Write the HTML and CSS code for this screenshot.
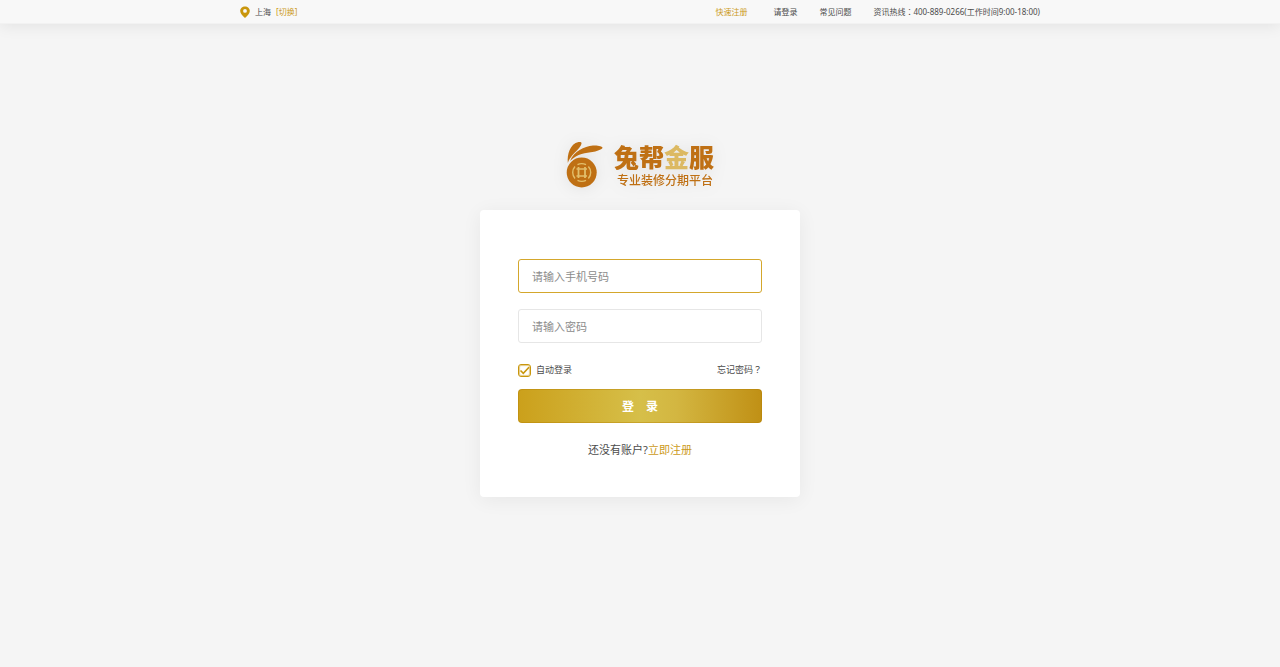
FILE: index.html
```
<!DOCTYPE html>
<html lang="zh-CN">
<head>
  <meta charset="UTF-8" />
  <meta name="viewport" content="width=device-width, initial-scale=1.0"/>
  <title>兔帮金服</title>
  <link rel="stylesheet" href="styles.css">
</head>
<body>
  <header class="topbar">
    <div class="topbar-inner">
      <div class="city">
        <svg class="pin" viewBox="0 0 10 12" aria-hidden="true">
          <path fill="#c9960c" fill-rule="evenodd" d="M5 0.5C2.3 0.5 0.2 2.5 0.2 5C0.2 7.6 2.4 9.4 5 12C7.6 9.4 9.8 7.6 9.8 5C9.8 2.5 7.7 0.5 5 0.5ZM5 3A1.9 1.9 0 1 1 5 6.8A1.9 1.9 0 1 1 5 3Z"/>
        </svg>
        <span>上海</span>
        <a class="gold" href="#">[切换]</a>
      </div>
      <nav class="links">
        <a class="gold register" href="#">快速注册</a>
        <a href="#">请登录</a>
        <a href="#">常见问题</a>
        <span>资讯热线<span class="mark" lang="zh-TW">：</span>400-889-0266(工作时间9:00-18:00)</span>
      </nav>
    </div>
  </header>

  <main class="page">
    <div class="brand">
      <svg class="logo" viewBox="0 0 38 48" aria-hidden="true">
        <path fill="#bf7014" d="M1.800 22C1 13 4 3 12.500 1C16 0.500 16 2 14.800 4.500C13 8 9 11 6.500 14C4.500 16.500 2.800 19 1.800 22Z"/>
        <path fill="#bf7014" d="M4 20C8 10.500 18 5.500 27 4.600C32 4.200 36.500 5.500 36.500 6.800C36 8.500 31.500 10 28 10.800C19 12 12 12.500 4 20Z"/>
        <circle cx="15.700" cy="31.500" r="15" fill="#bf7014"/>
        <g fill="none" stroke="#e2bf6c">
          <path stroke-width="1.400" d="M9 25.500A9 9 0 0 0 9 37.500M22.400 25.500A9 9 0 0 1 22.400 37.500M11.500 23.700A9.500 9.500 0 0 1 20 23.700M11.500 39.300A9.500 9.500 0 0 0 20 39.300"/>
          <path stroke-width="1.800" d="M12.500 26V37M19 26V37"/>
          <path stroke-width="1.500" d="M10.500 28H21M10.500 35H21"/>
        </g>
      </svg>
      <div class="brand-text">
        <h1>兔帮<span>金</span>服</h1>
        <p>专业装修分期平台</p>
      </div>
    </div>

    <form class="card">
      <input class="field active" type="text" placeholder="请输入手机号码" aria-label="手机号码" />
      <input class="field" type="password" placeholder="请输入密码" aria-label="密码" />
      <div class="options">
        <label class="remember" for="auto">
          <span class="tick">
            <input type="checkbox" id="auto" checked />
            <svg viewBox="0 0 13 13" aria-hidden="true">
              <path fill="none" stroke="#c9960c" stroke-width="1.600" d="M2.500 6.500L5.300 9.300L11 3.200"/>
            </svg>
          </span>
          自动登录
        </label>
        <a href="#">忘记密码<span class="mark" lang="zh-TW">？</span></a>
      </div>
      <button class="login" type="submit">登　录</button>
      <p class="signup">还没有账户?<a class="gold" href="#">立即注册</a></p>
    </form>
  </main>
</body>
</html>
```
FILE: styles.css
```
* {
  box-sizing: border-box;
}
body {
  margin: 0;
  min-height: 100vh;
  background: #f5f5f5;
  color: #4c4c4c;
  font-family: 'Noto Sans', 'Noto Sans CJK SC', sans-serif;
}
a {
  color: inherit;
  text-decoration: none;
}
a.gold {
  color: #cc9a1a;
}
/* full-width punctuation centred in its cell */
.mark {
  font-family: 'Noto Sans CJK TC', sans-serif;
  line-height: 1;
}
.topbar {
  background: #f8f8f8;
  border-bottom: 1px solid #f2f2f2;
  box-shadow: 0 2px 16px rgba(0, 0, 0, 0.08);
  font-size: 8px;
  line-height: 23px;
}
.topbar-inner {
  display: flex;
  justify-content: space-between;
  max-width: 800px;
  height: 23px;
  margin: 0 auto;
}
.city {
  display: flex;
  align-items: center;
  gap: 5px;
}
.pin {
  width: 10px;
  height: 12px;
}
.links {
  display: flex;
  gap: 22px;
}
.register {
  margin-right: 4px;
}
.page {
  display: flex;
  flex-direction: column;
  align-items: center;
  padding: 117px 16px 40px;
}
.brand {
  display: flex;
  gap: 10px;
  margin-bottom: 21px;
  filter: drop-shadow(0 1px 8px rgba(0, 0, 0, 0.08));
}
.logo {
  width: 38px;
  height: 48px;
}
.brand-text {
  color: #bf7014;
}
.brand h1 {
  margin: 0;
  font-size: 25px;
  font-weight: 900;
  line-height: 32px;
}
.brand h1 span {
  color: #dcb962;
}
.brand p {
  margin: 0;
  padding-left: 3px;
  font-size: 12px;
  font-weight: 500;
  line-height: 16px;
}
.card {
  display: flex;
  flex-direction: column;
  width: 100%;
  max-width: 320px;
  padding: 49px 38px 38px;
  background: #fff;
  border-radius: 4px;
  box-shadow: 0 3px 20px rgba(0, 0, 0, 0.06);
}
.field {
  width: 100%;
  height: 34px;
  margin-bottom: 16px;
  padding: 0 13px;
  border: 1px solid #e6e6e6;
  border-radius: 3px;
  background: #fff;
  color: #444;
  font-family: inherit;
  font-size: 11px;
  outline: none;
}
.field::placeholder {
  color: #8c8c8c;
}
.field.active,
.field:focus {
  border-color: #d4a72c;
}
.options {
  display: flex;
  justify-content: space-between;
  align-items: center;
  margin-bottom: 11px;
  padding-top: 3px;
  font-size: 9px;
  line-height: 16px;
}
.remember {
  display: flex;
  align-items: center;
  gap: 5px;
}
.tick {
  display: grid;
}
.tick input,
.tick svg {
  grid-area: 1 / 1;
  width: 13px;
  height: 13px;
}
.tick input {
  appearance: none;
  margin: 0;
  border: 1px solid #c9960c;
  border-radius: 3px;
  background: #fff;
  box-shadow: inset 0 0 1px 1px rgba(201, 150, 12, 0.5);
}
.tick svg {
  visibility: hidden;
  pointer-events: none;
}
.tick input:checked + svg {
  visibility: visible;
}
.login {
  height: 34px;
  padding: 0;
  border: 1px solid rgba(180, 125, 0, 0.4);
  border-radius: 4px;
  background: linear-gradient(90deg, #cba01b, #d6bf49 50%, #d3b641 65%, #c09015) border-box;
  color: #fff;
  font-family: inherit;
  font-size: 12px;
  font-weight: bold;
  cursor: pointer;
}
.signup {
  margin: 18px 0 0;
  font-size: 11px;
  line-height: 18px;
  text-align: center;
}
```
